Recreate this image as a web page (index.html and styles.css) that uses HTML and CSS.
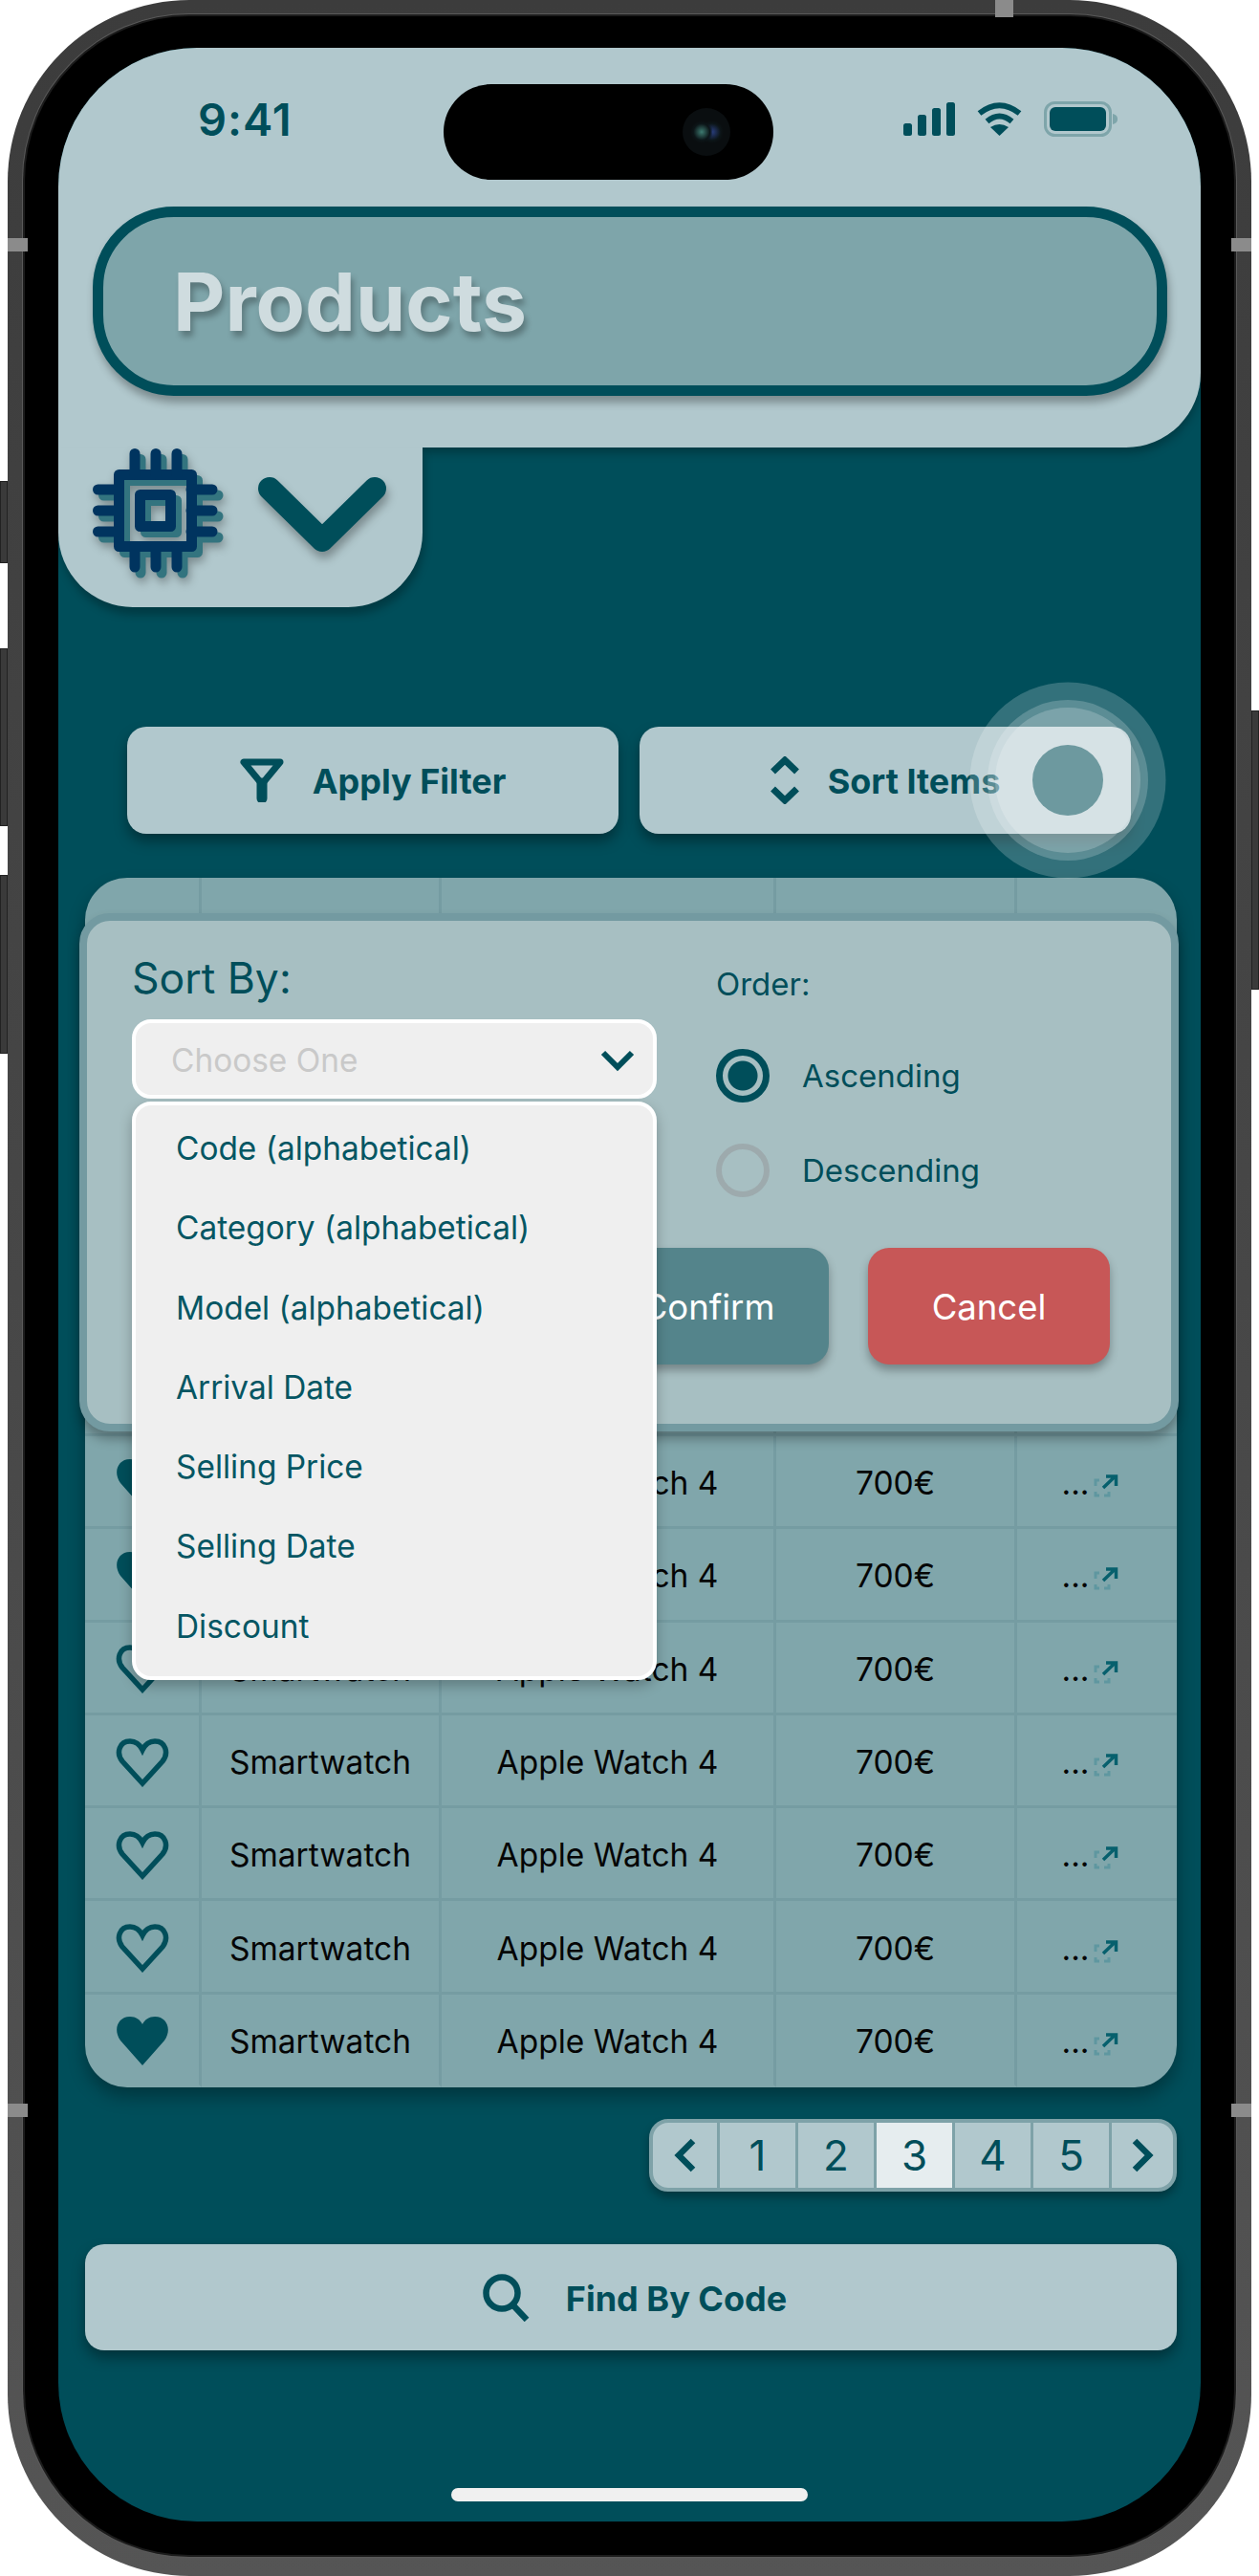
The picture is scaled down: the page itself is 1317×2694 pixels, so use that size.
FILE: index.html
```html
<!DOCTYPE html>
<html lang="en">
<head>
    <meta charset="UTF-8">
    <title>Products</title>
    <link rel="stylesheet" href="styles.css">
</head>
<body>
    <!-- shared icons -->
    <svg class="defs" width="0" height="0">
        <symbol id="heart-line" viewBox="0 0 56 51">
            <path d="M28 47 L7 24 C0 15 4 3 15 3 C21 3 25.500 7 28 12 C30.500 7 35 3 41 3 C52 3 56 15 49 24 Z" fill="none" stroke="#004e5a" stroke-width="5.500" stroke-linejoin="miter"/>
        </symbol>
        <symbol id="heart-full" viewBox="0 0 56 51">
            <path d="M28 51 L5 25 C-3 14 2 0 15 0 C21 0 25.500 3 28 8 C30.500 3 35 0 41 0 C54 0 59 14 51 25 Z" fill="#004e5a"/>
        </symbol>
        <symbol id="open-link" viewBox="0 0 26 24">
            <path d="M2 12 V6 H6 M2 18 V22 H6 M11 22 H16 V18" fill="none" stroke="#5f97a0" stroke-width="3"/>
            <path d="M10 14 L22 2.500 M13 2 H23.500 V12" fill="none" stroke="#07606d" stroke-width="3.500"/>
        </symbol>
    </svg>

    <div class="phone">
        <span class="band band-top"></span>
        <span class="band band-l1"></span>
        <span class="band band-r1"></span>
        <span class="band band-l2"></span>
        <span class="band band-r2"></span>
        <span class="side-btn side-mute"></span>
        <span class="side-btn side-up"></span>
        <span class="side-btn side-down"></span>
        <span class="side-btn side-power"></span>

        <div class="bezel">
            <div class="screen">
                <div class="island"><span class="camera"></span></div>

                <header class="top-panel">
                    <div class="status">
                        <span class="time">9:41</span>
                        <div class="status-icons">
                            <svg width="54" height="35" viewBox="0 0 54 35" fill="#004e5a">
                                <rect x="0" y="22" width="9" height="13" rx="2.500"/>
                                <rect x="15" y="13" width="9" height="22" rx="2.500"/>
                                <rect x="30" y="6" width="9" height="29" rx="2.500"/>
                                <rect x="45" y="0" width="9" height="35" rx="2.500"/>
                            </svg>
                            <svg width="47" height="35" viewBox="0 0 47 35">
                                <path d="M2.500 11.500 Q23.500 -5 44.500 11.500 M10.500 20 Q23.500 9 36.500 20" fill="none" stroke="#004e5a" stroke-width="6"/>
                                <path d="M23.500 35 L14 26 Q23.500 20 33 26 Z" fill="#004e5a"/>
                            </svg>
                            <svg width="78" height="37" viewBox="0 0 78 37">
                                <rect x="1.500" y="1.500" width="68" height="34" rx="10" fill="none" stroke="#7ea5aa" stroke-width="3"/>
                                <rect x="6" y="6" width="59" height="25" rx="6" fill="#004e5a"/>
                                <path d="M72 13 C76 14 77 16 77 18.500 C77 21 76 23 72 24 Z" fill="#7ea5aa"/>
                            </svg>
                        </div>
                    </div>
                    <div class="title-bar"><h1>Products</h1></div>
                </header>

                <div class="tab">
                    <svg class="chip" width="131" height="130" viewBox="0 0 131 130" fill="none" stroke="#00345f" stroke-width="11" stroke-linecap="round" stroke-linejoin="round">
                        <rect x="27.500" y="27.500" width="76" height="75"/>
                        <rect x="49.500" y="48.500" width="32" height="33"/>
                        <path d="M44 5.500 V27 M66 5.500 V27 M88 5.500 V27 M44 103 V124 M66 103 V124 M88 103 V124"/>
                        <path d="M5.500 43 H27 M5.500 65 H27 M5.500 87 H27 M103 43 H125 M103 65 H125 M103 87 H125"/>
                    </svg>
                    <svg class="tab-chevron" width="134" height="78" viewBox="0 0 134 78" fill="none" stroke="#004e5a" stroke-width="24" stroke-linecap="round" stroke-linejoin="round">
                        <path d="M12 12 L67 66 L122 12"/>
                    </svg>
                </div>

                <div class="actions">
                    <button class="action-btn">
                        <svg width="46" height="46" viewBox="0 0 46 46" fill="none" stroke="#004e5a" stroke-width="7" stroke-linejoin="round">
                            <path d="M4 4 H42 L23 27 Z"/>
                            <path d="M23 26 V42" stroke-width="11" stroke-linecap="round"/>
                        </svg>
                        <span>Apply Filter</span>
                    </button>
                    <button class="action-btn">
                        <svg width="30" height="50" viewBox="0 0 30 50" fill="none" stroke="#004e5a" stroke-width="7">
                            <path d="M2.500 16 L15 4 L27.500 16 M2.500 34 L15 46 L27.500 34"/>
                        </svg>
                        <span>Sort Items</span>
                    </button>
                </div>

                <div class="table">
                    <!-- header and first rows sit behind the sort dialog -->
                    <div class="cell"></div><div class="cell"></div><div class="cell"></div><div class="cell"></div><div class="cell"></div>

                    <div class="cell"><svg class="heart"><use href="#heart-full"/></svg></div>
                    <div class="cell">Smartwatch</div><div class="cell">Apple Watch 4</div><div class="cell">700€</div>
                    <div class="cell more">...<svg class="link-icon"><use href="#open-link"/></svg></div>

                    <div class="cell"><svg class="heart"><use href="#heart-full"/></svg></div>
                    <div class="cell">Smartwatch</div><div class="cell">Apple Watch 4</div><div class="cell">700€</div>
                    <div class="cell more">...<svg class="link-icon"><use href="#open-link"/></svg></div>

                    <div class="cell"><svg class="heart"><use href="#heart-line"/></svg></div>
                    <div class="cell">Smartwatch</div><div class="cell">Apple Watch 4</div><div class="cell">700€</div>
                    <div class="cell more">...<svg class="link-icon"><use href="#open-link"/></svg></div>

                    <div class="cell"><svg class="heart"><use href="#heart-line"/></svg></div>
                    <div class="cell">Smartwatch</div><div class="cell">Apple Watch 4</div><div class="cell">700€</div>
                    <div class="cell more">...<svg class="link-icon"><use href="#open-link"/></svg></div>

                    <div class="cell"><svg class="heart"><use href="#heart-line"/></svg></div>
                    <div class="cell">Smartwatch</div><div class="cell">Apple Watch 4</div><div class="cell">700€</div>
                    <div class="cell more">...<svg class="link-icon"><use href="#open-link"/></svg></div>

                    <div class="cell"><svg class="heart"><use href="#heart-line"/></svg></div>
                    <div class="cell">Smartwatch</div><div class="cell">Apple Watch 4</div><div class="cell">700€</div>
                    <div class="cell more">...<svg class="link-icon"><use href="#open-link"/></svg></div>

                    <div class="cell"><svg class="heart"><use href="#heart-full"/></svg></div>
                    <div class="cell">Smartwatch</div><div class="cell">Apple Watch 4</div><div class="cell">700€</div>
                    <div class="cell more">...<svg class="link-icon"><use href="#open-link"/></svg></div>
                </div>

                <nav class="pager">
                    <a class="page page-arrow">
                        <svg width="24" height="36" viewBox="0 0 24 36" fill="none" stroke="#004e5a" stroke-width="6.500"><path d="M20 3 L5 18 L20 33"/></svg>
                    </a>
                    <a class="page">1</a>
                    <a class="page">2</a>
                    <a class="page page-active">3</a>
                    <a class="page">4</a>
                    <a class="page">5</a>
                    <a class="page page-arrow">
                        <svg width="24" height="36" viewBox="0 0 24 36" fill="none" stroke="#004e5a" stroke-width="6.500"><path d="M4 3 L19 18 L4 33"/></svg>
                    </a>
                </nav>

                <button class="find-btn">
                    <svg width="50" height="50" viewBox="0 0 50 50" fill="none" stroke="#004e5a" stroke-width="6.500">
                        <circle cx="20" cy="20" r="16.500"/>
                        <path d="M31 32 L46 48"/>
                    </svg>
                    <span>Find By Code</span>
                </button>

                <div class="home-bar"></div>

                <!-- sort dialog -->
                <div class="modal">
                    <div class="modal-body">
                        <div>
                            <div class="sort-label">Sort By:</div>
                            <div class="select">
                                <span>Choose One</span>
                                <svg width="36" height="24" viewBox="0 0 36 24" fill="none" stroke="#004e5a" stroke-width="6"><path d="M3 4 L18 19 L33 4"/></svg>
                            </div>
                        </div>
                        <div>
                            <div class="order-label">Order:</div>
                            <div class="radio-list">
                                <div class="radio-row"><span class="radio radio-on"></span>Ascending</div>
                                <div class="radio-row"><span class="radio"></span>Descending</div>
                            </div>
                        </div>
                    </div>
                    <div class="modal-actions">
                        <button class="confirm-btn">Confirm</button>
                        <button class="cancel-btn">Cancel</button>
                    </div>
                    <ul class="select-menu">
                        <li>Code (alphabetical)</li>
                        <li>Category (alphabetical)</li>
                        <li>Model (alphabetical)</li>
                        <li>Arrival Date</li>
                        <li>Selling Price</li>
                        <li>Selling Date</li>
                        <li>Discount</li>
                    </ul>
                </div>

                <!-- touch indicator -->
                <div class="touch touch-outer"></div>
                <div class="touch touch-mid"></div>
                <div class="touch touch-inner"></div>
                <div class="touch touch-core"></div>
            </div>
        </div>
    </div>
</body>
</html>
```

FILE: styles.css
```css
* {
    box-sizing: border-box;
}
html, body {
    margin: 0;
    padding: 0;
    width: 1317px;
    height: 2694px;
    overflow: hidden;
    background-color: #fff;
}
body {
    font-family: 'Inter', 'Liberation Sans', sans-serif;
    color: #004e5a;
}
button {
    font-family: inherit;
    border: none;
    padding: 0;
}
.defs {
    position: absolute;
}

/* phone frame */
.phone {
    position: relative;
    width: 1301px;
    height: 2694px;
    margin-left: 8px;
    padding: 17px 18px 22px;
    border-radius: 190px;
    background: linear-gradient(#3c3c3c, #474747 50%, #555);
}
.bezel {
    height: 100%;
    padding: 33px 35px 35px;
    border-radius: 172px;
    background-color: #000;
    box-shadow: 0 0 0 2px #1c1c1c, 0 0 0 3px #5a5a5a;
}
.band {
    position: absolute;
    background-color: #8b8b8b;
}
.band-top { left: 1033px; top: 0; width: 19px; height: 18px; }
.band-l1 { left: 0; top: 249px; width: 21px; height: 14px; }
.band-r1 { right: 0; top: 249px; width: 21px; height: 14px; }
.band-l2 { left: 0; top: 2200px; width: 21px; height: 14px; }
.band-r2 { right: 0; top: 2200px; width: 21px; height: 14px; }
.side-btn {
    position: absolute;
    width: 8px;
    background-color: #3a3a3a;
    border: 1px solid #222;
}
.side-mute { left: -8px; top: 503px; height: 86px; }
.side-up { left: -8px; top: 678px; height: 186px; }
.side-down { left: -8px; top: 915px; height: 187px; }
.side-power { right: -8px; top: 743px; height: 292px; }

.screen {
    position: relative;
    display: flex;
    flex-direction: column;
    height: 100%;
    overflow: hidden;
    border-radius: 145px;
    background-color: #004e5a;
}
.island {
    position: absolute;
    left: 403px;
    top: 38px;
    z-index: 5;
    width: 345px;
    height: 100px;
    border-radius: 50px;
    background-color: #000;
}
.camera {
    position: absolute;
    left: 250px;
    top: 25px;
    width: 50px;
    height: 50px;
    border-radius: 50%;
    background: radial-gradient(circle at 40% 50%, #3d7a70 0, #0c1518 22%, transparent 30%),
                radial-gradient(circle at 62% 50%, #2a3f80 0, #0c1518 22%, transparent 30%),
                #0a0e10;
}

/* header */
.top-panel {
    position: relative;
    z-index: 2;
    flex: none;
    height: 418px;
    padding: 48px 36px 0;
    border-radius: 0 0 78px 0;
    background-color: #b1c8cd;
    box-shadow: 0 6px 10px rgba(0,0,0,0.25);
}
.status {
    display: flex;
    justify-content: space-between;
    align-items: center;
    height: 52px;
    margin-bottom: 66px;
    padding: 0 50px 0 110px;
}
.time {
    font-size: 47px;
    font-weight: 600;
    letter-spacing: 1px;
}
.status-icons {
    display: flex;
    align-items: center;
    gap: 23px;
}
.title-bar {
    display: flex;
    align-items: center;
    width: 1124px;
    height: 198px;
    padding-left: 73px;
    border: 11px solid #004e5a;
    border-radius: 85px;
    background-color: #7ea5aa;
    box-shadow: 2px 7px 8px rgba(0,0,0,0.3);
}
.title-bar h1 {
    margin: 0;
    font-size: 84px;
    font-weight: 700;
    color: #cfdcdf;
    text-shadow: 3px 6px 6px rgba(0,0,0,0.28);
}
.tab {
    position: relative;
    z-index: 3;
    flex: none;
    display: flex;
    align-items: flex-start;
    gap: 42px;
    width: 381px;
    height: 167px;
    padding: 1px 0 0 36px;
    border-radius: 0 0 78px 78px;
    background-color: #b1c8cd;
    box-shadow: 2px 8px 8px rgba(0,0,0,0.25);
}
.chip {
    overflow: visible;
    filter: drop-shadow(6px 6px 0 #33747f) drop-shadow(2px 5px 5px rgba(0,0,0,0.3));
}
.tab-chevron {
    margin-top: 30px;
    filter: drop-shadow(2px 7px 5px rgba(0,0,0,0.3));
}

/* action buttons */
.actions {
    flex: none;
    display: flex;
    gap: 22px;
    margin: 125px 0 46px 72px;
}
.action-btn {
    display: flex;
    justify-content: center;
    align-items: center;
    gap: 30px;
    width: 514px;
    height: 112px;
    border-radius: 20px;
    font-size: 36px;
    font-weight: 700;
    color: #004e5a;
    background-color: #b1c8cd;
    box-shadow: 0 8px 14px rgba(0,0,0,0.35);
}
.action-btn span, .find-btn span {
    padding-top: 2px;
}

/* table */
.table {
    flex: none;
    display: grid;
    grid-template-columns: 122px 251px 350px 252px 167px;
    grid-template-rows: 584px repeat(7, 97.3px);
    width: 1142px;
    margin-left: 28px;
    overflow: hidden;
    border-radius: 44px;
    background-color: #80a6ab;
    box-shadow: 0 10px 18px rgba(0,0,0,0.3);
}
.cell {
    display: flex;
    justify-content: center;
    align-items: center;
    padding-top: 4px;
    font-size: 33.500px;
    color: #050505;
    border-right: 3px solid #759ca2;
    border-bottom: 3px solid #759ca2;
}
.cell:nth-child(5n) {
    border-right: none;
}
.cell:nth-last-child(-n+5) {
    border-bottom-color: transparent;
}
.heart {
    width: 56px;
    height: 51px;
}
.more {
    padding-right: 14px;
}
.link-icon {
    width: 26px;
    height: 24px;
    margin: 6px 0 0 5px;
}

/* pagination */
.pager {
    flex: none;
    display: flex;
    align-self: flex-end;
    width: 552px;
    height: 76px;
    margin: 33px 25px 0 0;
    overflow: hidden;
    border: 4px solid #7ea2a8;
    border-radius: 20px;
    background-color: #b1c8cd;
    box-shadow: 0 6px 10px rgba(0,0,0,0.3);
}
.page {
    flex: 1;
    display: flex;
    justify-content: center;
    align-items: center;
    font-size: 44px;
    color: #004e5a;
    border-left: 3px solid #7ea2a8;
}
.page-arrow {
    flex: 0 0 67px;
}
.page-arrow:first-child {
    border-left: none;
}
.page-active {
    background-color: #e6edef;
}

.find-btn {
    flex: none;
    display: flex;
    justify-content: center;
    align-items: center;
    gap: 37px;
    width: 1142px;
    height: 111px;
    margin: 55px 0 0 28px;
    padding-left: 8px;
    border-radius: 20px;
    font-size: 36px;
    font-weight: 700;
    color: #004e5a;
    background-color: #b1c8cd;
    box-shadow: 0 8px 14px rgba(0,0,0,0.35);
}
.home-bar {
    flex: none;
    align-self: center;
    width: 373px;
    height: 14px;
    margin-top: 144px;
    border-radius: 7px;
    background-color: #f0f0f0;
}

/* sort dialog */
.modal {
    position: absolute;
    left: 22px;
    top: 905px;
    z-index: 6;
    width: 1150px;
    height: 542px;
    padding-top: 36px;
    border: 8px solid #739aa1;
    border-radius: 32px;
    background-color: #a7bfc2;
    box-shadow: 0 8px 12px rgba(0,0,0,0.3);
}
.modal-body {
    display: grid;
    grid-template-columns: 549px auto;
    gap: 62px;
    padding-left: 47px;
}
.sort-label {
    height: 48px;
    margin-bottom: 19px;
    font-size: 44.500px;
    line-height: 48px;
}
.select {
    display: flex;
    justify-content: space-between;
    align-items: center;
    height: 83px;
    padding: 2px 19px 0 37px;
    border: 4px solid #fff;
    border-radius: 20px;
    font-size: 33.400px;
    color: #c9c9c9;
    background-color: #efefef;
}
.order-label {
    margin: 10px 0 48px;
    font-size: 33px;
    line-height: 40px;
}
.radio-list {
    display: flex;
    flex-direction: column;
    gap: 43px;
}
.radio-row {
    display: flex;
    align-items: center;
    gap: 34px;
    height: 56px;
    font-size: 33px;
}
.radio {
    width: 56px;
    height: 56px;
    border: 6px solid #9daaad;
    border-radius: 50%;
}
.radio-on {
    border: 7px solid #004e5a;
    background: radial-gradient(circle, #004e5a 0, #004e5a 15px, transparent 16px);
}
.modal-actions {
    display: flex;
    justify-content: flex-end;
    gap: 41px;
    margin-top: 53px;
    padding-right: 64px;
}
.confirm-btn, .cancel-btn {
    height: 122px;
    padding-top: 2px;
    border-radius: 22px;
    font-size: 36.500px;
    color: #fff;
    box-shadow: 0 6px 10px rgba(0,0,0,0.3);
}
.confirm-btn {
    width: 258px;
    padding-left: 6px;
    background-color: #54848b;
}
.cancel-btn {
    width: 253px;
    background-color: #c75757;
}
.select-menu {
    position: absolute;
    left: 47px;
    top: 189px;
    width: 549px;
    height: 605px;
    margin: 0;
    padding: 4px 0 0 42px;
    list-style: none;
    border: 4px solid #fff;
    border-radius: 20px;
    color: #055663;
    background-color: #efefef;
    box-shadow: 0 6px 14px rgba(0,0,0,0.25);
    font-size: 33.400px;
    line-height: 83.300px;
}

/* touch indicator rings */
.touch {
    position: absolute;
    z-index: 7;
    left: 1056px;
    top: 766px;
    border-radius: 50%;
    background-color: rgba(255,255,255,0.2);
    transform: translate(-50%, -50%);
}
.touch-outer { width: 205px; height: 205px; }
.touch-mid { width: 168px; height: 168px; }
.touch-inner { width: 152px; height: 152px; }
.touch-core { width: 74px; height: 74px; background-color: #6d999f; }
```
